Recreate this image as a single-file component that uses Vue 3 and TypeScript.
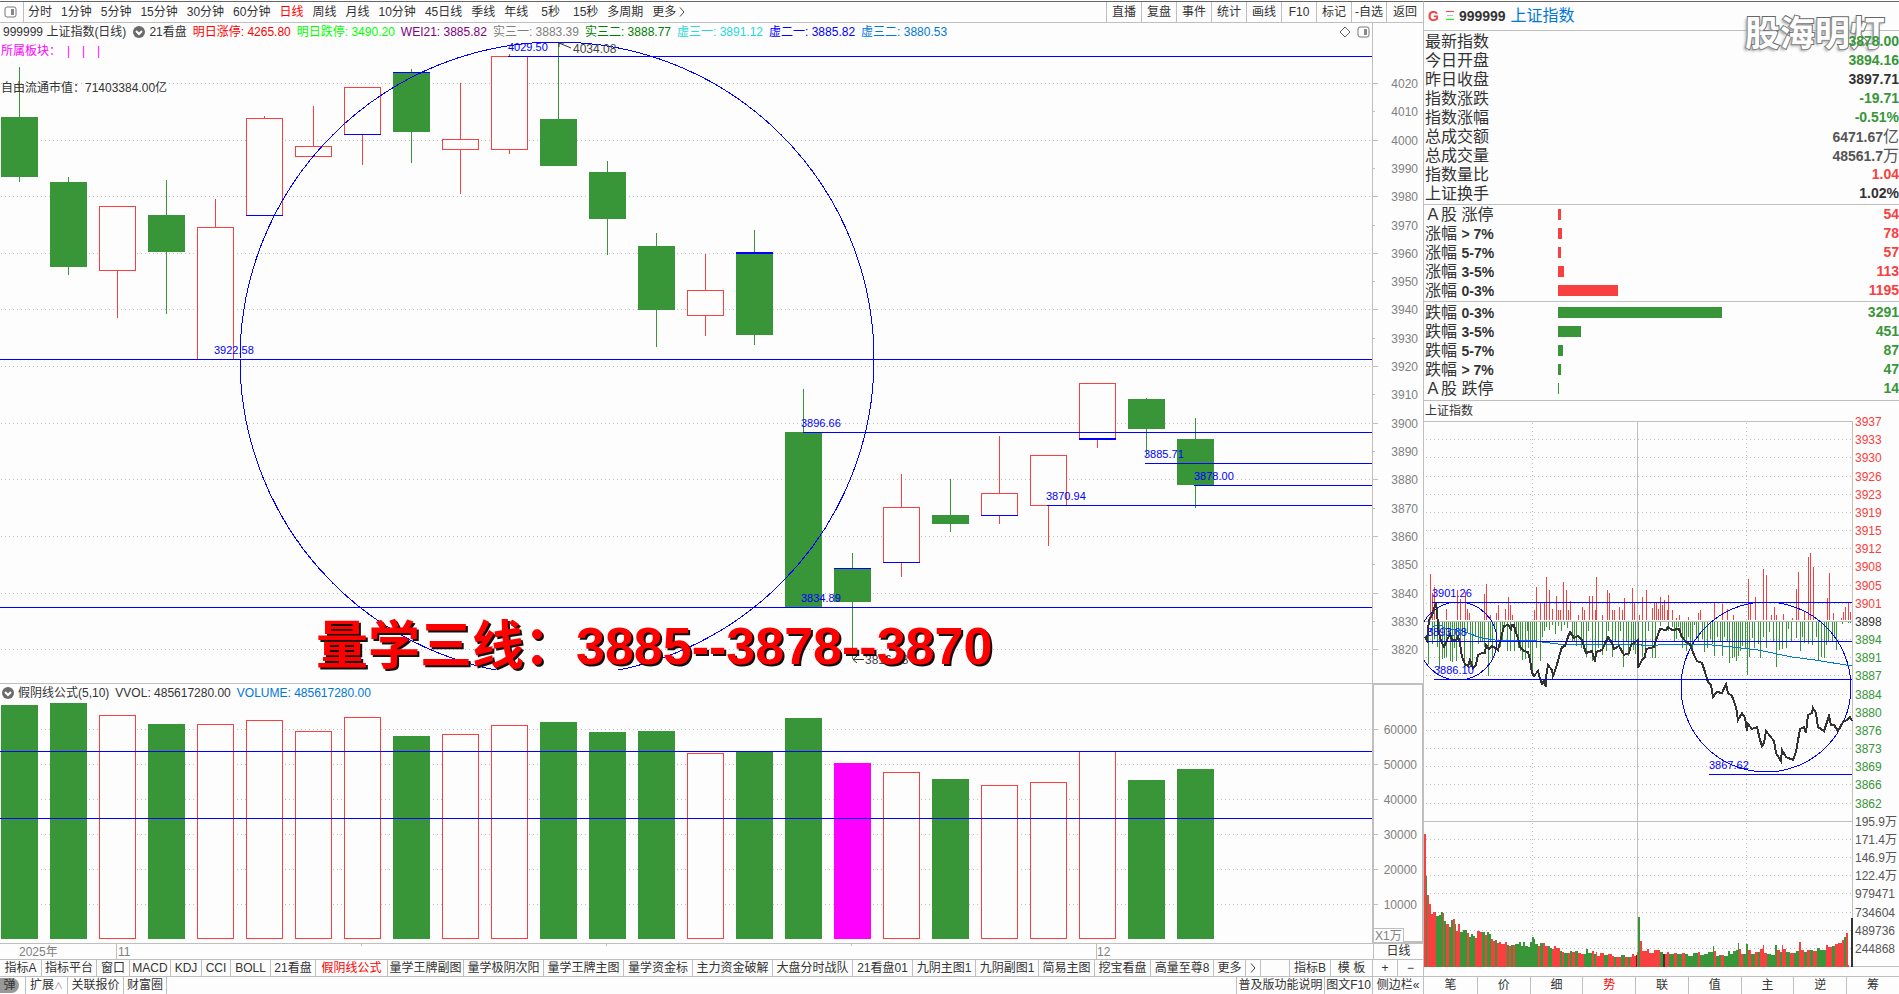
<script setup lang="ts">
interface Candle {
  up: boolean
  top: number
  bottom: number
  high: number
  low: number
  mark?: 'top' | 'bottom'
  thick?: boolean
}
interface Level {
  value: string
  x: number
  y: number
  labelX: number
  labelY: number
}
interface Stat {
  label: string
  value: string
  unit?: string
  tone: string
}
interface Breadth {
  name: string
  range?: string
  count: number
  bar: number
}

const periods = [
  '分时', '1分钟', '5分钟', '15分钟', '30分钟', '60分钟', '日线', '周线', '月线',
  '10分钟', '45日线', '季线', '年线', '5秒', '15秒', '多周期', '更多',
]
const tools = ['直播', '复盘', '事件', '统计', '画线', 'F10', '标记', '-自选', '返回']

const readings = [
  { text: '明日涨停: 4265.80', tone: 'r' },
  { text: '明日跌停: 3490.20', tone: 'lime' },
  { text: 'WEI21: 3885.82', tone: 'purple' },
  { text: '实三一: 3883.39', tone: 'grey' },
  { text: '实三二: 3888.77', tone: 'dgreen' },
  { text: '虚三一: 3891.12', tone: 'cyan' },
  { text: '虚二一: 3885.82', tone: 'blue' },
  { text: '虚三二: 3880.53', tone: 'azure' },
]

const candles: Candle[] = [
  { up: false, top: 117, bottom: 177, high: 67, low: 182 },
  { up: false, top: 182, bottom: 267, high: 177, low: 275 },
  { up: true, top: 206, bottom: 270, high: 206, low: 318 },
  { up: false, top: 215, bottom: 252, high: 180, low: 314 },
  { up: true, top: 227, bottom: 359, high: 199, low: 359 },
  { up: true, top: 118, bottom: 215, high: 116, low: 215, mark: 'bottom' },
  { up: true, top: 146, bottom: 156, high: 106, low: 156 },
  { up: true, top: 87, bottom: 134, high: 87, low: 165, mark: 'bottom' },
  { up: false, top: 72, bottom: 132, high: 69, low: 163, mark: 'top' },
  { up: true, top: 139, bottom: 149, high: 83, low: 194 },
  { up: true, top: 56, bottom: 149, high: 54, low: 154 },
  { up: false, top: 119, bottom: 166, high: 42, low: 166 },
  { up: false, top: 172, bottom: 219, high: 161, low: 255 },
  { up: false, top: 246, bottom: 310, high: 233, low: 347 },
  { up: true, top: 290, bottom: 315, high: 254, low: 336 },
  { up: false, top: 252, bottom: 335, high: 230, low: 345, mark: 'top', thick: true },
  { up: false, top: 432, bottom: 608, high: 389, low: 608 },
  { up: false, top: 568, bottom: 602, high: 553, low: 659, mark: 'top' },
  { up: true, top: 507, bottom: 562, high: 474, low: 577, mark: 'bottom' },
  { up: false, top: 515, bottom: 524, high: 479, low: 532 },
  { up: true, top: 493, bottom: 515, high: 436, low: 524, mark: 'bottom' },
  { up: true, top: 455, bottom: 505, high: 455, low: 546 },
  { up: true, top: 383, bottom: 438, high: 383, low: 448, mark: 'bottom', thick: true },
  { up: false, top: 399, bottom: 429, high: 398, low: 456 },
  { up: false, top: 439, bottom: 485, high: 418, low: 508 },
]
const candleX = (i: number): number => 1 + 49 * i

const priceTicks = Array.from({ length: 21 }, (_, i) => ({
  value: 4020 - i * 10,
  y: Math.round(83 + i * 28.31),
  major: i % 2 === 0,
}))

const levels: Level[] = [
  { value: '4029.50', x: 508, y: 56, labelX: 508, labelY: 51 },
  { value: '3922.58', x: 0, y: 359, labelX: 214, labelY: 354 },
  { value: '3896.66', x: 803, y: 432, labelX: 801, labelY: 427 },
  { value: '3834.89', x: 0, y: 607, labelX: 801, labelY: 602 },
  { value: '3885.71', x: 1145, y: 463, labelX: 1144, labelY: 458 },
  { value: '3878.00', x: 1194, y: 485, labelX: 1194, labelY: 480 },
  { value: '3870.94', x: 1047, y: 505, labelX: 1046, labelY: 500 },
]

const volumeTops = [
  705, 703, 715, 724, 724, 720, 731, 717, 736, 734, 725, 722, 732,
  731, 753, 752, 718, 763, 772, 779, 785, 782, 751, 780, 769,
]
const volumeTone = (i: number): string => (i === 17 ? 'vol-hot' : candles[i].up ? 'up-box' : 'down-box')
const volumeTicks = [60000, 50000, 40000, 30000, 20000, 10000].map((value, i) => ({
  value,
  y: Math.round(729 + i * 34.9),
}))

const dateTicks = [361, 606, 851]

const indicatorTabs: [string, number][] = [
  ['指标A', 42], ['指标平台', 55], ['窗口', 33], ['MACD', 41], ['KDJ', 31], ['CCI', 29],
  ['BOLL', 40], ['21看盘', 45], ['假阴线公式', 72], ['量学王牌副图', 76], ['量学极阴次阳', 80],
  ['量学王牌主图', 80], ['量学资金标', 69], ['主力资金破解', 80], ['大盘分时战队', 80],
  ['21看盘01', 60], ['九阴主图1', 63], ['九阴副图1', 63], ['简易主图', 56], ['挖宝看盘', 56],
  ['高量至尊8', 63], ['更多', 32],
]

const stats: Stat[] = [
  { label: '最新指数', value: '3878.00', tone: 'g' },
  { label: '今日开盘', value: '3894.16', tone: 'g' },
  { label: '昨日收盘', value: '3897.71', tone: 'k' },
  { label: '指数涨跌', value: '-19.71', tone: 'g' },
  { label: '指数涨幅', value: '-0.51%', tone: 'g' },
  { label: '总成交额', value: '6471.67', unit: '亿', tone: 'd' },
  { label: '总成交量', value: '48561.7', unit: '万', tone: 'd' },
  { label: '指数量比', value: '1.04', tone: 'red' },
  { label: '上证换手', value: '1.02%', tone: 'k' },
]
const risers: Breadth[] = [
  { name: 'Ａ股 涨停', count: 54, bar: 3 },
  { name: '涨幅', range: '> 7%', count: 78, bar: 4 },
  { name: '涨幅', range: '5-7%', count: 57, bar: 3 },
  { name: '涨幅', range: '3-5%', count: 113, bar: 6 },
  { name: '涨幅', range: '0-3%', count: 1195, bar: 60 },
]
const fallers: Breadth[] = [
  { name: '跌幅', range: '0-3%', count: 3291, bar: 164 },
  { name: '跌幅', range: '3-5%', count: 451, bar: 23 },
  { name: '跌幅', range: '5-7%', count: 87, bar: 5 },
  { name: '跌幅', range: '> 7%', count: 47, bar: 3 },
  { name: 'Ａ股 跌停', count: 14, bar: 1 },
]
const breadth = [
  { tone: 'red', rows: risers },
  { tone: 'g', rows: fallers },
]

const sideLabels = [
  '3937', '3933', '3930', '3926', '3923', '3919', '3915', '3912', '3908', '3905', '3901',
  '3898', '3894', '3891', '3887', '3884', '3880', '3876', '3873', '3869', '3866', '3862',
  '195.9万', '171.4万', '146.9万', '122.4万', '979471', '734604', '489736', '244868',
]
const sideTicks = sideLabels.map((text, i) => ({
  text,
  y: Math.round(i * 18.17),
  tone: i < 11 ? 'red' : i === 11 ? 'k' : i < 22 ? 'g' : 'd',
  solid: i === 0 || i === 11 || i === 22,
}))

const pricePath =
  '1,216 3,219 5,199 8,194 12,182 13,189 14,206 16,217 18,222 20,226 23,219 26,213 28,219 32,219 34,216 36,222 38,236 41,243 44,245 46,239 49,247 52,244 54,234 58,232 61,232 62,224 65,228 68,225 74,229 77,217 80,205 84,204 87,208 88,204 90,204 91,209 94,217 96,226 100,230 104,231 106,239 108,252 110,255 114,250 116,258 118,263 120,260 122,266 122,256 124,244 128,249 129,255 132,247 135,236 138,226 141,225 144,216 146,211 150,217 154,215 158,219 160,226 162,232 168,230 171,241 172,231 178,229 180,225 184,216 188,222 190,228 195,225 200,234 205,232 207,224 214,219 214,247 218,239 221,236 222,228 230,226 232,219 236,208 242,209 244,206 248,209 255,208 258,216 262,221 266,223 270,234 273,240 278,242 281,251 284,261 287,264 289,276 293,271 298,272 302,263 304,272 308,275 312,286 314,299 318,292 321,297 323,310 324,303 328,308 333,306 336,319 338,325 340,322 342,310 346,315 350,320 352,332 357,340 358,329 362,336 369,339 372,331 376,308 380,306 382,312 384,294 388,292 389,287 392,292 394,306 400,310 405,295 407,304 410,304 414,310 419,301 423,299 426,296 428,300'
const averagePath =
  '1,217 5,211 11,204 16,204 21,207 38,210 58,217 71,219 108,219 118,221 134,223 161,223 211,223 224,225 244,223 278,223 308,226 334,229 368,236 391,239 428,245'

const pairs = (source: string): number[][] => source.split(' ').map((p) => p.split(',').map(Number))

/* momentum bars above and below the previous close: x,length */
const strengthUp = pairs(
  '6,46 8,27 10,33 22,11 33,30 36,21 41,28 43,11 45,7 60,26 62,36 66,5 72,7 74,15 81,11 84,23 86,15 88,5 110,10 112,33 116,17 120,18 122,43 125,30 128,11 132,24 134,10 136,10 139,38 142,30 144,10 146,19 154,5 158,13 160,10 165,24 168,24 171,10 172,43 178,5 183,30 185,27 188,10 190,10 195,13 198,10 200,22 208,32 210,17 215,5 218,23 222,30 228,12 230,17 232,17 234,11 236,23 238,15 240,20 243,10 244,25 248,10 252,2 255,5 264,3 274,7 276,10 290,17 298,16 303,11 309,5 324,41 326,17 331,23 339,51 342,45 347,5 350,13 352,5 359,6 368,2 372,31 374,48 380,8 384,63 386,67 389,53 403,22 405,47 409,7 417,2 419,8 421,13 424,17 426,8',
)
const strengthDown = pairs(
  '4,42 8,22 10,17 13,25 15,47 18,37 20,36 22,35 24,15 26,39 28,40 30,26 32,39 34,19 36,26 38,9 40,45 43,10 46,44 48,47 51,15 54,22 56,19 58,20 60,25 64,54 66,19 68,36 70,5 72,15 76,25 78,19 80,5 83,29 86,29 90,29 92,9 94,26 96,29 98,38 101,37 103,9 104,26 106,36 108,50 110,19 112,26 116,39 118,15 120,9 122,5 125,8 128,3 131,12 134,4 137,9 140,3 143,6 148,20 150,19 152,24 157,26 159,26 162,35 164,9 168,39 171,35 174,26 178,33 182,29 184,9 188,35 191,20 194,23 196,9 199,45 202,20 204,34 207,25 209,28 211,32 214,17 218,35 221,26 224,9 228,36 231,36 236,4 244,9 248,5 250,19 252,17 254,5 256,15 258,26 260,19 262,29 264,15 266,24 268,26 270,3 272,17 274,19 278,17 280,30 283,26 286,17 288,22 290,34 293,15 296,20 298,34 300,15 303,20 305,41 308,36 310,35 312,39 314,34 316,29 318,24 321,26 323,53 325,35 328,16 330,26 334,22 336,36 339,15 342,26 345,10 349,19 352,45 355,28 358,27 362,26 364,7 367,20 372,16 376,29 378,15 380,21 384,22 388,23 392,15 394,39 397,35 400,36 402,23 404,20 408,19 410,15 412,28 418,2 424,1 426,1',
)

/* minute volume: x,height,colour; each bar reaches to the next one */
const minuteSource =
  '0,133,r 2,91,g 3,72,r 5,63,r 7,53,r 9,55,r 12,51,g 15,52,g 17,55,g 19,54,r 20,46,g 22,43,r 25,40,g 27,47,g 29,48,r 31,43,g 32,36,r 34,43,r 36,35,g 39,37,g 43,34,r 45,30,g 47,33,g 49,31,g 51,29,r 53,36,r 56,35,r 58,35,g 61,32,r 63,35,g 65,33,g 67,28,r 69,26,r 71,27,g 73,24,r 75,25,r 77,23,r 81,25,r 83,22,g 85,21,r 87,22,g 89,22,r 91,23,g 95,25,g 97,21,g 99,25,g 101,21,g 104,20,g 106,25,g 108,30,g 110,28,g 111,23,g 114,21,r 116,24,g 119,24,r 121,21,r 124,21,g 126,19,g 128,18,r 130,21,r 132,19,r 136,16,g 138,15,r 140,14,g 144,14,r 146,16,g 148,15,r 151,16,g 154,14,r 157,13,r 160,13,g 162,18,g 164,14,g 168,16,r 170,13,g 172,15,r 173,11,r 176,14,r 180,12,g 184,13,r 188,11,r 190,10,g 192,10,r 197,12,g 201,10,r 204,10,g 206,10,r 208,13,r 210,11,r 212,12,k 213,15,r 214,50,g 216,26,r 218,16,r 223,18,r 225,14,r 230,17,r 236,15,g 239,13,k 241,13,r 243,15,r 245,13,g 250,14,r 253,13,g 258,14,r 261,13,g 264,11,g 269,14,g 274,15,r 276,12,g 280,13,g 284,15,g 289,21,g 290,16,r 292,11,g 295,12,g 297,12,r 300,11,g 304,16,g 306,13,g 309,16,g 312,17,g 314,24,g 315,18,r 317,13,r 319,13,g 322,23,g 324,17,r 327,13,g 331,15,r 334,15,g 336,18,r 339,22,r 340,14,r 343,13,g 347,12,g 351,22,g 353,17,r 356,15,g 358,22,r 359,18,r 362,15,g 366,14,r 370,14,g 372,16,g 375,25,r 377,17,r 380,15,g 383,17,r 386,17,g 389,16,r 393,19,g 396,17,g 400,17,g 402,22,r 404,20,r 408,21,g 411,23,r 414,24,r 418,27,r 420,30,g 422,34,r 424,2,r 425,0,r'
const minuteBars = minuteSource
  .split(' ')
  .map((p) => p.split(','))
  .map(([x, h, tone], i, all) => ({
    x: Number(x),
    h: Number(h),
    tone: `m-${tone}`,
    w: i + 1 < all.length ? Number(all[i + 1][0]) - Number(x) : 0,
  }))

const sideLevels: Level[] = [
  { value: '3901.26', x: 8, y: 181, labelX: 8, labelY: 176 },
  { value: '3893.68', x: 2, y: 220, labelX: 3, labelY: 215 },
  { value: '3886.10', x: 10, y: 258, labelX: 10, labelY: 253 },
  { value: '3867.62', x: 285, y: 353, labelX: 285, labelY: 348 },
]

const sideTabs = ['笔', '价', '细', '势', '联', '值', '主', '逆', '筹']
</script>

<template>
  <div class="terminal">
    <main class="main">
      <nav class="toolbar">
        <button class="panel-toggle" type="button" aria-label="面板">
          <svg width="13" height="12" viewBox="0 0 13 12">
            <rect x="1" y="1" width="11" height="10" rx="2" class="pane-frame" />
            <rect x="7" y="3" width="3" height="6" class="pane-fill" />
          </svg>
        </button>
        <div class="periods">
          <button
            v-for="p in periods"
            :key="p"
            type="button"
            :class="{ active: p === '日线', sec: p.endsWith('秒') }"
          >{{ p }}</button>
          <svg class="more" width="6" height="10" viewBox="0 0 6 10"><path d="M1 0.5 5 5 1 9.5" /></svg>
        </div>
        <div class="tools">
          <button v-for="t in tools" :key="t" type="button">{{ t }}</button>
        </div>
      </nav>

      <section class="price-panel">
        <svg class="chart" viewBox="0 23 1423 660" preserveAspectRatio="none">
          <defs>
            <clipPath id="price-clip"><rect x="0" y="23" width="1372" height="647" /></clipPath>
          </defs>
          <g class="crisp">
            <template v-for="t in priceTicks" :key="t.value">
              <line v-if="t.major" class="dots" x1="1" x2="1372" :y1="t.y + 0.5" :y2="t.y + 0.5" />
              <rect class="axis" x="1373" :y="t.y" :width="t.major ? 5 : 2" height="1" />
            </template>
            <rect class="axis" x="1372" y="23" width="1" height="660" />
            <g v-for="(c, i) in candles" :key="i">
              <template v-if="c.up">
                <rect class="up" :x="candleX(i) + 18" :y="c.high" width="1" :height="c.top - c.high" />
                <rect class="up" :x="candleX(i) + 18" :y="c.bottom" width="1" :height="c.low - c.bottom" />
                <rect
                  class="up-box"
                  :x="candleX(i) + 0.5"
                  :y="c.top + 0.5"
                  width="36"
                  :height="c.bottom - c.top"
                />
              </template>
              <template v-else>
                <rect class="down" :x="candleX(i) + 18" :y="c.high" width="1" :height="c.low - c.high" />
                <rect class="down" :x="candleX(i)" :y="c.top" width="37" :height="c.bottom - c.top" />
              </template>
              <rect
                v-if="c.mark"
                class="mark"
                :x="candleX(i)"
                :y="c.mark === 'top' ? c.top : c.bottom"
                width="37"
                :height="c.thick ? 2 : 1"
              />
            </g>
            <circle class="ring" cx="557" cy="359" r="317" clip-path="url(#price-clip)" />
            <rect
              v-for="l in levels"
              :key="l.value"
              class="mark"
              :x="l.x"
              :y="l.y"
              :width="1372 - l.x"
              height="1"
            />
          </g>
          <text v-for="t in priceTicks" :key="t.value" class="tick" x="1418" :y="t.y + 5">{{ t.value }}</text>
          <text v-for="l in levels" :key="l.value" class="level" :x="l.labelX" :y="l.labelY">{{ l.value }}</text>
          <path class="arrow" d="M571 48 559 43M559 47V43h5" />
          <text class="extreme" x="573" y="53">4034.08</text>
          <path class="arrow" d="M864 659.5H853M857 656 853 659.5 857 663" />
          <text class="extreme" x="865" y="664">3816.58</text>
          <text class="headline" x="316" y="664">量学三线：3885--3878--3870</text>
        </svg>
        <div class="overlay">
          <div class="readings">
            <span>999999 上证指数(日线)</span>
            <svg class="chevron" width="12" height="12" viewBox="0 0 12 12">
              <circle cx="6" cy="6" r="6" /><path d="M3 5 6 8 9 5" />
            </svg>
            <span>21看盘</span>
            <span v-for="r in readings" :key="r.text" :class="r.tone">{{ r.text }}</span>
          </div>
          <div class="corner">
            <svg width="12" height="12" viewBox="0 0 12 12"><path class="diamond" d="M6 1 11 6 6 11 1 6Z" /></svg>
            <svg width="13" height="12" viewBox="0 0 13 12">
              <rect x="1" y="1" width="11" height="10" rx="2" class="pane-frame" />
              <rect x="7" y="3" width="3" height="6" class="pane-fill" />
            </svg>
          </div>
        </div>
        <div class="sector">所属板块：<i>|</i><i>|</i><i>|</i></div>
        <div class="float-cap">自由流通市值：71403384.00亿</div>
      </section>

      <section class="volume-panel">
        <svg class="chart" viewBox="0 684 1423 259" preserveAspectRatio="none">
          <g class="crisp">
            <template v-for="t in volumeTicks" :key="t.value">
              <line class="dots" x1="1" x2="1372" :y1="t.y + 0.5" :y2="t.y + 0.5" />
              <rect class="axis" x="1374" :y="t.y" width="4" height="1" />
            </template>
            <rect
              v-for="(top, i) in volumeTops"
              :key="i"
              class="vol"
              :class="volumeTone(i)"
              :x="candleX(i) + 0.5"
              :y="top + 0.5"
              width="36"
              :height="938 - top"
            />
            <rect class="mark" x="0" y="751" width="1372" height="1" />
            <rect class="mark" x="0" y="818" width="1372" height="1" />
            <path class="axis-box" d="M1423 684H1373V942H1423V684" />
            <rect class="unit-box" x="1373" y="928" width="30" height="14" />
          </g>
          <text v-for="t in volumeTicks" :key="t.value" class="tick" x="1417" :y="t.y + 5">{{ t.value }}</text>
          <text class="tick start" x="1375" y="940">X1万</text>
        </svg>
        <div class="overlay">
          <div class="readings">
            <svg class="chevron" width="12" height="12" viewBox="0 0 12 12">
              <circle cx="6" cy="6" r="6" /><path d="M3 5 6 8 9 5" />
            </svg>
            <span>假阴线公式(5,10)</span>
            <span>VVOL: 485617280.00</span>
            <span class="azure">VOLUME: 485617280.00</span>
          </div>
        </div>
      </section>

      <div class="dates">
        <svg class="chart" viewBox="0 944 1373 15" preserveAspectRatio="none">
          <g class="crisp">
            <rect v-for="x in dateTicks" :key="x" class="axis" :x="x" y="944" width="1" height="2" />
            <rect class="axis" x="116" y="944" width="1" height="15" />
            <rect class="axis" x="1096" y="944" width="1" height="15" />
          </g>
          <text class="tick start" x="19" y="956">2025年</text>
          <text class="tick start" x="118" y="956">11</text>
          <text class="tick start" x="1097" y="956">12</text>
        </svg>
        <button type="button" class="cycle">日线</button>
      </div>

      <nav class="indicators">
        <button
          v-for="[name, w] in indicatorTabs"
          :key="name"
          type="button"
          :class="{ active: name === '假阴线公式' }"
          :style="{ width: w + 'px' }"
        >{{ name }}</button>
        <button type="button" class="next" aria-label="下一页">
          <svg class="more" width="6" height="10" viewBox="0 0 6 10"><path d="M1 0.5 5 5 1 9.5" /></svg>
        </button>
        <span class="grow"></span>
        <button type="button" class="mid">指标B</button>
        <button type="button" class="mid">模 板</button>
        <button type="button" class="zoom">+</button>
        <button type="button" class="zoom">−</button>
      </nav>

      <footer class="status">
        <button type="button" class="pop"><b>弹</b></button>
        <button type="button" class="w41">扩展<small>∧</small></button>
        <button type="button" class="w56">关联报价</button>
        <button type="button" class="w44 edge">财富圈</button>
        <span class="grow"></span>
        <button type="button" class="w88">普及版功能说明</button>
        <button type="button" class="w48">图文F10</button>
        <button type="button" class="w51">侧边栏«</button>
      </footer>
    </main>

    <aside class="side">
      <header class="quote">
        <b class="g-flag">G</b>
        <svg width="8" height="10" viewBox="0 0 8 10" class="crisp">
          <rect x="0" y="0" width="8" height="1" class="up" />
          <rect x="1" y="4" width="6" height="1" class="axis" />
          <rect x="0" y="8" width="8" height="1" class="lime-fill" />
        </svg>
        <b class="code">999999</b>
        <a href="#">上证指数</a>
        <strong class="watermark">股海明灯</strong>
      </header>

      <dl class="stats">
        <div v-for="s in stats" :key="s.label">
          <dt>{{ s.label }}</dt>
          <dd :class="s.tone">{{ s.value }}<span v-if="s.unit">{{ s.unit }}</span></dd>
        </div>
      </dl>

      <dl v-for="b in breadth" :key="b.tone" class="breadth" :class="b.tone">
        <div v-for="r in b.rows" :key="r.name + r.range">
          <dt>{{ r.name }} <b v-if="r.range">{{ r.range }}</b></dt>
          <dd class="gauge"><i :style="{ width: r.bar + 'px' }"></i></dd>
          <dd class="count">{{ r.count }}</dd>
        </div>
      </dl>

      <h2>上证指数</h2>

      <svg class="chart mini" viewBox="0 0 475 555" preserveAspectRatio="none">
        <defs>
          <clipPath id="mini-clip"><rect x="0" y="0" width="428" height="546" /></clipPath>
        </defs>
        <g class="crisp">
          <template v-for="t in sideTicks" :key="t.text">
            <rect v-if="t.solid" class="axis" x="0" :y="t.y" width="428" height="1" />
            <line v-else class="dots" x1="2" x2="428" :y1="t.y + 0.5" :y2="t.y + 0.5" />
          </template>
          <line class="dots" x1="108.5" x2="108.5" y1="2" y2="545" />
          <line class="dots" x1="322.5" x2="322.5" y1="2" y2="545" />
          <rect class="axis" x="213" y="0" width="1" height="545" />
          <rect class="axis" x="428" y="0" width="1" height="545" />
          <rect class="axis" x="0" y="545" width="475" height="1" />
          <rect v-for="(b, i) in strengthUp" :key="'u' + i" class="up" :x="b[0]" :y="199 - b[1]" width="1" :height="b[1]" />
          <rect v-for="(b, i) in strengthDown" :key="'d' + i" class="down" :x="b[0]" y="201" width="1" :height="b[1]" />
          <rect v-for="(b, i) in minuteBars" :key="'m' + i" :class="b.tone" :x="b.x" :y="546 - b.h" :width="b.w" :height="b.h" />
          <rect class="m-k" x="427" y="497" width="2" height="49" />
          <g clip-path="url(#mini-clip)">
            <circle class="ring" cx="34" cy="220" r="39" />
            <circle class="ring" cx="342" cy="266" r="85" />
          </g>
          <polyline class="average" :points="averagePath" />
          <polyline class="trace" :points="pricePath" />
          <rect v-for="l in sideLevels" :key="l.value" class="mark" :x="l.x" :y="l.y" :width="428 - l.x" height="1" />
        </g>
        <text v-for="t in sideTicks" :key="t.text" class="side-tick" :class="t.tone" x="431" :y="t.y + 5">{{ t.text }}</text>
        <text v-for="l in sideLevels" :key="l.value" class="level" :x="l.labelX" :y="l.labelY">{{ l.value }}</text>
      </svg>

      <nav class="side-tabs">
        <button v-for="t in sideTabs" :key="t" type="button" :class="{ active: t === '势' }">{{ t }}</button>
      </nav>
    </aside>
  </div>
</template>

<style>
body {
  margin: 0;
  background: #fdfdfd;
}
</style>

<style scoped>
.terminal {
  box-sizing: border-box;
  display: flex;
  height: 100vh;
  min-height: 720px;
  padding-top: 1px;
  overflow: hidden;
  background: #fdfdfd;
  color: #333;
  font: 12px/16px "Liberation Sans", "Noto Sans CJK SC", sans-serif;
}
.main,
.side {
  display: flex;
  flex-direction: column;
  border-top: 1px solid #666;
  box-sizing: border-box;
}
.main {
  flex: 1;
  min-width: 0;
}
.side {
  width: 476px;
  border-left: 1px solid #bfbfbf;
}
button {
  box-sizing: border-box;
  margin: 0;
  padding: 0;
  border: 0;
  background: none;
  color: inherit;
  font: inherit;
  white-space: nowrap;
}
button.active {
  color: #f00;
}
.crisp {
  shape-rendering: crispEdges;
}
.chart {
  display: block;
  width: 100%;
  height: 100%;
}
.grow {
  flex: 1;
}

.toolbar {
  display: flex;
  height: 20px;
  border-bottom: 1px solid #bfbfbf;
}
.panel-toggle {
  display: flex;
  align-items: center;
  justify-content: flex-end;
  width: 24px;
  padding-right: 6px;
  border-right: 1px solid #bfbfbf;
}
.pane-frame {
  fill: none;
  stroke: #777;
}
.pane-fill {
  fill: #888;
}
.periods {
  display: flex;
  flex: 1;
  align-items: center;
  gap: 9px;
  padding-left: 4px;
}
.periods .sec {
  padding-left: 4px;
}
.periods .more {
  margin-left: -6px;
}
.more path {
  fill: none;
  stroke: #444;
}
.tools {
  display: flex;
}
.tools button {
  width: 35px;
  border-left: 1px solid #bfbfbf;
}
.tools button:last-child {
  width: 37px;
}

.price-panel {
  position: relative;
  flex: 660;
  min-height: 0;
  border-bottom: 1px solid #bfbfbf;
}
.volume-panel {
  position: relative;
  flex: 259;
  min-height: 0;
  border-bottom: 1px solid #bfbfbf;
}
.overlay {
  position: absolute;
  top: 0;
  left: 0;
  display: flex;
  justify-content: space-between;
  box-sizing: border-box;
  width: 100%;
  padding: 1px 53px 0 2px;
}
.readings {
  display: flex;
  align-items: center;
  gap: 6px;
  white-space: nowrap;
}
.readings .chevron {
  margin-right: -2px;
}
.price-panel .readings {
  padding-left: 1px;
}
.price-panel .chevron {
  margin-left: 1px;
}
.chevron circle {
  fill: #6a6a6a;
}
.chevron path {
  fill: none;
  stroke: #fff;
  stroke-width: 2;
}
.corner {
  display: flex;
  align-items: center;
  gap: 6px;
}
.diamond {
  fill: none;
  stroke: #666;
}
.sector,
.float-cap {
  position: absolute;
  left: 1px;
  white-space: pre;
}
.sector {
  top: 20px;
  color: #f0f;
}
.sector i {
  display: inline-block;
  width: 15px;
  text-indent: 6px;
  font-style: normal;
}
.float-cap {
  top: 57px;
}
.r { color: #f00; }
.lime { color: #0f0; }
.purple { color: #800080; }
.grey { color: #808080; }
.dgreen { color: #008000; }
.cyan { color: #26d9d9; }
.blue { color: #00f; }
.azure { color: #0078d4; }

.dots {
  stroke: #bfbfbf;
  stroke-dasharray: 1 3;
}
.axis {
  fill: #bfbfbf;
}
.lime-fill {
  fill: #0f0;
}
.up {
  fill: #f84040;
}
.down {
  fill: #389638;
}
.up-box {
  fill: #fdfdfd;
  stroke: #f84040;
}
.down-box {
  fill: #389638;
  stroke: #389638;
}
.vol-hot {
  fill: #f0f;
  stroke: #f0f;
}
.mark {
  fill: #00f;
}
.ring {
  fill: none;
  stroke: #00f;
}
.arrow {
  fill: none;
  stroke: #333;
}
.axis-box {
  fill: none;
  stroke: #bfbfbf;
  stroke-width: 2;
}
.unit-box {
  fill: #fdfdfd;
  stroke: #bfbfbf;
}
.tick {
  fill: #808080;
  text-anchor: end;
}
.tick.start {
  text-anchor: start;
}
.level {
  fill: #00f;
  font-size: 11px;
}
.extreme {
  fill: #444;
}
.headline {
  fill: #f00;
  font-size: 52px;
  font-weight: bold;
  filter: drop-shadow(2px 2px 0 #111);
}

.dates {
  display: flex;
  height: 15px;
  border-bottom: 1px solid #bfbfbf;
}
.dates .chart {
  flex: 1;
  min-width: 0;
}
.cycle {
  width: 50px;
  border-left: 1px solid #bfbfbf;
  line-height: 15px;
}

.indicators,
.status {
  display: flex;
}
.indicators {
  height: 16px;
  border-bottom: 1px solid #bfbfbf;
}
.indicators button {
  display: flex;
  flex: none;
  align-items: center;
  justify-content: center;
  border-right: 1px solid #bfbfbf;
  line-height: 15px;
}
.indicators .next {
  width: 15px;
}
.indicators .mid {
  width: 42px;
}
.indicators .grow + .mid {
  border-left: 1px solid #bfbfbf;
}
.indicators .zoom {
  width: 25px;
}
.indicators .zoom:last-child {
  border-right: 0;
}
.status {
  height: 17px;
}
.status button {
  flex: none;
  border-left: 1px solid #bfbfbf;
  line-height: 17px;
}
.status .pop {
  width: 25px;
  border-left: 0;
  text-align: left;
}
.pop b {
  display: block;
  width: 19px;
  height: 15px;
  border-radius: 0 8px 8px 0;
  background: #999;
  font-weight: normal;
  line-height: 15px;
  text-align: center;
}
.status small {
  color: #888;
  font-size: 9px;
}
.w41 { width: 42px; }
.w56 { width: 56px; }
.w44 { width: 44px; }
.w88 { width: 88px; }
.w48 { width: 48px; }
.w51 { width: 51px; }
.status .edge {
  border-right: 1px solid #bfbfbf;
}

.quote {
  position: relative;
  display: flex;
  align-items: center;
  height: 28px;
  padding-left: 4px;
  border-bottom: 1px solid #bfbfbf;
  font-size: 14px;
}
.quote svg {
  margin: 0 5px 0 7px;
}
.g-flag {
  color: #f84040;
}
.quote a {
  margin-left: 5px;
  color: #0078d4;
  font-size: 16px;
  text-decoration: none;
}
.watermark {
  position: absolute;
  top: 8px;
  right: 14px;
  color: #fff;
  font-size: 35px;
  line-height: 48px;
  paint-order: stroke fill;
  -webkit-text-stroke: 2px #666;
  text-shadow: -2px 2px 3px #999;
}
.stats,
.breadth {
  margin: 0;
  border-bottom: 1px solid #bfbfbf;
}
.stats {
  padding: 1px 0;
}
.breadth.red {
  padding-bottom: 1px;
}
.breadth.g {
  padding: 1px 0 2px;
}
dl > div {
  display: flex;
  align-items: center;
  height: 19px;
  padding-left: 1px;
}
dt {
  flex: 1;
  font-size: 16px;
  line-height: 19px;
  white-space: nowrap;
}
dt b {
  font-size: 14px;
}
dd {
  position: relative;
  margin: 0;
  font-size: 14px;
  font-weight: bold;
  line-height: 19px;
}
dd span {
  font-size: 16px;
  font-weight: normal;
}
.breadth dt {
  flex: none;
  width: 133px;
  color: #333;
}
.gauge {
  flex: 1;
}
.gauge i {
  display: block;
  height: 11px;
  background: currentColor;
}
.red {
  color: #f84040;
  fill: #f84040;
}
.g {
  color: #389638;
  fill: #389638;
}
.k {
  color: #333;
  fill: #333;
}
.d {
  color: #555;
  fill: #555;
}
h2 {
  height: 20px;
  margin: 0;
  padding-left: 1px;
  font-size: 12px;
  font-weight: normal;
  line-height: 20px;
}
.mini {
  flex: 1;
  height: auto;
  min-height: 0;
  overflow: visible;
}
.average {
  fill: none;
  stroke: #0078d4;
}
.trace {
  fill: none;
  stroke: #333;
  stroke-width: 2;
}
.m-r { fill: #f84040; }
.m-g { fill: #389638; }
.m-k { fill: #333; }
.side-tabs {
  display: grid;
  grid-template-columns: repeat(9, 1fr);
  height: 17px;
  border-top: 1px solid #bfbfbf;
}
.side-tabs button {
  line-height: 17px;
}
.side-tabs button + button {
  border-left: 1px solid #bfbfbf;
}
</style>
